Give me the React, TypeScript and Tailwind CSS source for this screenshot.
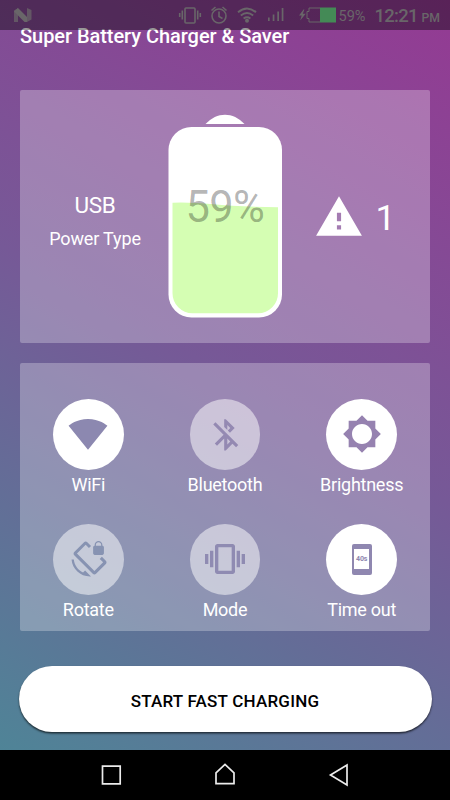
import type { ReactNode } from "react";

const paths = {
  wifi: "M12.01 21.49L23.64 7c-.45-.34-4.93-4-11.64-4C5.28 3 .81 6.66.36 7l11.63 14.49.01.01.01-.01z",
  bluetooth:
    "M13 5.83l1.88 1.88-1.6 1.6 1.41 1.41 3.02-3.02L12 2h-1v5.03l2 2v-3.2zM5.41 4L4 5.41 10.59 12 5 17.59 6.41 19 11 14.41V22h1l4.29-4.29 2.3 2.29L20 18.59 5.41 4zM13 18.17v-3.76l1.88 1.88L13 18.17z",
  brightness:
    "M20 15.31L23.31 12 20 8.69V4h-4.69L12 .69 8.69 4H4v4.69L.69 12 4 15.31V20h4.69L12 23.31 15.31 20H20v-4.69zM12 18c-3.31 0-6-2.69-6-6s2.69-6 6-6 6 2.69 6 6-2.69 6-6 6z",
  rotate:
    "M23.25 12.77l-2.57-2.57-1.41 1.41 2.22 2.22-5.66 5.66L4.51 8.17l5.66-5.66 2.1 2.1 1.41-1.41L11.23.75c-.59-.59-1.54-.59-2.12 0L2.75 7.11c-.59.59-.59 1.54 0 2.12l12.02 12.02c.59.59 1.54.59 2.12 0l6.36-6.36c.59-.59.59-1.54 0-2.12zM8.47 20.48C5.2 18.94 2.86 15.76 2.5 12H1c.51 6.16 5.66 11 11.95 11l.66-.03-3.81-3.82-1.33 1.33zM16 9h5c.55 0 1-.45 1-1V4c0-.55-.45-1-1-1v-.5C21 1.12 19.88 0 18.5 0S16 1.12 16 2.5V3c-.55 0-1 .45-1 1v4c0 .55.45 1 1 1zm.8-6.5c0-.94.76-1.7 1.7-1.7s1.7.76 1.7 1.7V3h-3.4v-.5z",
  vibration:
    "M0 15h2V9H0v6zm3 2h2V7H3v10zm19-8v6h2V9h-2zm-3 8h2V7h-2v10zM16.5 3h-9C6.67 3 6 3.67 6 4.500v15c0 .83.67 1.5 1.5 1.5h9c.83 0 1.5-.67 1.5-1.5v-15c0-.83-.67-1.5-1.5-1.5zM16 19H8V5h8v14z",
  warning: "M1 21h22L12 2 1 21zm12-3h-2v-2h2v2zm0-4h-2v-4h2v4z",
};

function Glyph({ d, className }: { d: string; className: string }) {
  return (
    <svg viewBox="0 0 24 24" className={className} fill="currentColor" overflow="visible">
      <path d={d} />
    </svg>
  );
}

function StatusBar() {
  return (
    <div className="absolute inset-x-0 top-0 flex h-[30px] items-center bg-black/40 text-[#696669]">
      <svg className="h-[30px] w-[450px]" viewBox="0 0 450 30" fill="none" stroke="currentColor">
        <g stroke="none" fill="currentColor">
          <path d="M14 10.500l4-2.500v14h-4zM27 8l4.500 2v9.500l-4.500 2.500z" opacity=".75" />
          <path d="M18 8l9 9v5h-2.500L14 11.500z" />
        </g>
        <g strokeWidth="1.600">
          <rect x="185" y="8" width="10" height="15" rx="1" />
          <path d="M182.300 10.500v9M197.700 10.500v9M179.700 13v4M200.300 13v4" />
          <circle cx="219" cy="16" r="7" />
          <path d="M219 11.500v5l3.500 2M211.500 10.500l4-3.500M226.500 10.500l-4-3.500" />
          <path d="M238 12.200q9-7.500 18 0M240.800 15.400q6.200-5 12.400 0M243.600 18.500q3.400-2.500 6.800 0" strokeWidth="1.900" />
        </g>
        <g stroke="none" fill="currentColor">
          <circle cx="247" cy="20.800" r="2" />
          <path d="M268 17.500h1.700V21h-1.700zM272.700 14.500h1.700V21h-1.700zM277.300 11.500h1.700V21h-1.700zM281.700 8h1.700v13h-1.700z" />
          <path d="M303.500 9.500l-4.500 6h2.700l-1.500 5 5.500-6.700h-2.900l1.600-4.300z" />
        </g>
        <path d="M320 8h-11v3.500h-2v7h2V22h11" strokeWidth="1" />
        <path d="M320 7.500h16v15h-16z" fill="#448a56" stroke="none" />
        <text x="338.500" y="21" fontSize="15.500" fontFamily="Roboto, sans-serif" fill="currentColor" stroke="none" textLength="27" lengthAdjust="spacingAndGlyphs">59%</text>
        <text x="374.500" y="22" fontSize="18.500" fontWeight="500" fontFamily="Roboto, sans-serif" fill="currentColor" stroke="none" textLength="44" lengthAdjust="spacing">12:21</text>
        <text x="421.500" y="22" fontSize="12.500" fontWeight="500" fontFamily="Roboto, sans-serif" fill="currentColor" stroke="none" textLength="18.500" lengthAdjust="spacingAndGlyphs">PM</text>
      </svg>
    </div>
  );
}

function Battery() {
  return (
    <div className="relative h-[204px] w-[114px]">
      <svg viewBox="168 114 114 204" className="h-[204px] w-[114px]">
        <path d="M205.500 124C217 111.500 233 111.500 244.500 124z" fill="#fff" />
        <rect x="168.500" y="127" width="113.500" height="190.500" rx="23" fill="#fff" />
        <path d="M172.500 202.700Q190 202 213 204.300T278 207.200V293a20 20 0 0 1-20 20.300h-65.500a20 20 0 0 1-20-20.300z" fill="#d5feb3" />
      </svg>
      <span className="absolute top-[69px] left-[17.500px] text-[43.500px] leading-[50px] tracking-[-0.700px] whitespace-nowrap text-black/30">59%</span>
    </div>
  );
}

function Toggle({ label, on = false, children }: { label: string; on?: boolean; children: ReactNode }) {
  return (
    <div className="flex h-[125px] flex-col items-center">
      <div className={`flex size-[70.500px] shrink-0 items-center justify-center rounded-full ${on ? "bg-white" : "bg-white/50"}`}>
        {children}
      </div>
      <span className="mt-[3.500px] text-[18px] leading-[24px] tracking-[-0.250px] whitespace-nowrap">{label}</span>
    </div>
  );
}

export default function App() {
  return (
    <div className="relative flex h-[800px] w-[450px] flex-col overflow-hidden bg-black font-[Roboto,sans-serif] text-white">
      <main className="flex h-[750px] flex-col bg-[linear-gradient(30deg,#4f8497_0%,#765997_50%,#943a93_100%)] px-[20px] pt-[23px]">
        <h1 className="h-[67px] text-[20px] leading-[26px] font-medium tracking-[-0.050px] whitespace-nowrap">Super Battery Charger &amp; Saver</h1>

        <section className="flex h-[253px] items-start rounded-[2px] bg-white/27 pt-[24px]">
          <div className="flex w-[148px] flex-col items-center pt-[77px] pl-[2px]">
            <span className="text-[22.500px] leading-[28px] tracking-[-0.300px]">USB</span>
            <span className="mt-[8px] text-[18px] leading-[24px] tracking-[-0.150px]">Power Type</span>
          </div>
          <Battery />
          <div className="flex items-center pt-[77px] pl-[32px]">
            <Glyph d={paths.warning} className="size-[50px]" />
            <span className="ml-[11.500px] pt-[2px] text-[35.500px] leading-[50px]">1</span>
          </div>
        </section>

        <section className="mt-[19.500px] grid h-[268.500px] grid-cols-3 content-start rounded-[2px] bg-white/27 pt-[36.500px]">
          <Toggle label="WiFi" on>
            <Glyph d={paths.wifi} className="size-[40px] text-[#8c88b0]" />
          </Toggle>
          <Toggle label="Bluetooth">
            <Glyph d={paths.bluetooth} className="ml-[2px] size-[37.500px] text-[#9489b2]" />
          </Toggle>
          <Toggle label="Brightness" on>
            <Glyph d={paths.brightness} className="size-[40px] text-[#9682b0]" />
          </Toggle>
          <Toggle label="Rotate">
            <Glyph d={paths.rotate} className="mt-[1px] size-[37px] text-[#8793b2]" />
          </Toggle>
          <Toggle label="Mode">
            <Glyph d={paths.vibration} className="size-[40px] text-[#8f8bb2]" />
          </Toggle>
          <Toggle label="Time out" on>
            <div className="flex h-[31px] w-[20px] items-center justify-center rounded-[2px] bg-[#8f87b0]">
              <div className="flex h-[20px] w-[15px] items-center justify-center bg-white text-[7px] leading-none font-bold tracking-[-0.100px] text-[#8f87b0]">40s</div>
            </div>
          </Toggle>
        </section>

        <button className="mx-[-1.500px] mt-[35px] h-[66px] rounded-full bg-white pt-[6px] text-[17px] font-medium tracking-[0.220px] text-black shadow-[0_1.500px_2px_rgba(0,0,0,0.650)]">
          START FAST CHARGING
        </button>
      </main>

      <nav className="flex h-[50px] items-center bg-black">
        <svg viewBox="0 0 450 50" className="h-[50px] w-[450px]" fill="none" stroke="#ececec" strokeWidth="1.700">
          <path d="M102.500 16.200h17.700v17.600h-17.700z" />
          <path d="M216 33.600V22.800l9-8.300 9 8.300v10.800z" />
          <path d="M330.500 25l16.500-10v20z" />
        </svg>
      </nav>

      <StatusBar />
    </div>
  );
}
